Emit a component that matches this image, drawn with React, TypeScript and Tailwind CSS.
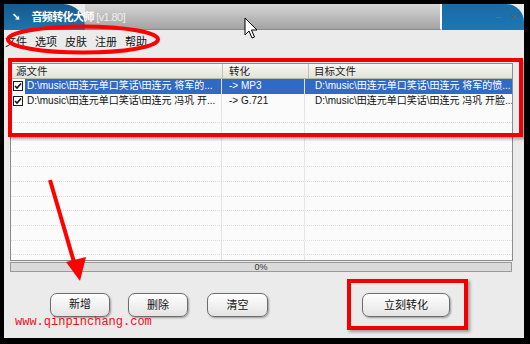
import React from "react";

const font = { fontFamily: '"Liberation Sans", "Noto Sans CJK SC", sans-serif' };

const rows = [
  {
    src: "D:\\music\\田连元单口笑话\\田连元 将军的...",
    conv: "-> MP3",
    dst: "D:\\music\\田连元单口笑话\\田连元 将军的愤...",
    selected: true,
  },
  {
    src: "D:\\music\\田连元单口笑话\\田连元 冯巩 开...",
    conv: "-> G.721",
    dst: "D:\\music\\田连元单口笑话\\田连元 冯巩 开脸...",
    selected: false,
  },
];

function CheckBox() {
  return (
    <span className="w-[10px] h-[10px] border border-[#1c1c1c] bg-white flex items-center justify-center shrink-0">
      <svg width="8" height="8" viewBox="0 0 8 8">
        <path d="M1 4 L3 6 L7 1.5" fill="none" stroke="#111" strokeWidth="1.6" />
      </svg>
    </span>
  );
}

function Button({ label, w }: { label: string; w: string }) {
  return (
    <button
      className={`${w} h-[24px] rounded-[7px] border border-[#6d6d6d] bg-gradient-to-b from-white to-[#e4e4e4] text-[11px] text-[#111] shadow-[1px_1px_2px_rgba(0,0,0,0.35)]`}
    >
      {label}
    </button>
  );
}

export default function App() {
  const empty = Array.from({ length: 11 });
  return (
    <div className="relative w-[530px] h-[344px] bg-black overflow-hidden pl-[4px] pt-[4px] pr-[6px] pb-[6px]" style={font}>
      <div className="relative w-full h-full bg-[#ebebeb] flex flex-col">
        {/* title bar */}
        <div className="relative h-[26px] flex shrink-0">
          <div className="w-[81px] bg-gradient-to-b from-[#155a8c] to-[#1f74ad] rounded-tr-[22px]" />
          <div className="flex-1 bg-gradient-to-b from-[#d6d6d6] to-[#a3a3a3] border-r-2 border-white border-b border-b-[#8a8a8a]" />
          <div className="w-[82px] bg-gradient-to-b from-[#1b6aa3] to-[#1a78b6] rounded-tr-[18px] flex items-center justify-end gap-[10px] pr-[8px]">
            <span className="text-[9px] text-[#8a6a55] leading-none">–</span>
            <span className="text-[9px] text-[#7a5a4a] leading-none">×</span>
          </div>
          <div className="absolute left-[8px] top-[5px] flex items-center gap-[12px] text-white font-bold text-[11px] tracking-[-0.6px]">
            <span className="text-[10px] leading-none">➘</span>
            <span>
              音频转化大师 <span className="text-[#eeeeee] font-normal">[v1.80]</span>
            </span>
          </div>
        </div>

        {/* menu */}
        <div className="h-[24px] flex items-center gap-[8px] pl-[1px] text-[11px] text-[#111] shrink-0">
          <span>文件</span>
          <span>选项</span>
          <span>皮肤</span>
          <span>注册</span>
          <span>帮助</span>
        </div>

        {/* list */}
        <div className="ml-[6px] mt-[9px] w-[503px] h-[198px] border border-[#8c8c8c] bg-[#fbfbfb] flex flex-col overflow-hidden text-[10px] leading-none">
          <div className="h-[15px] flex bg-gradient-to-b from-[#f7f7f4] to-[#e3e2da] border-b border-[#b8b7ae] text-[#222] text-[10.5px] shrink-0">
            <div className="w-[212px] border-r border-[#c2c1b8] pl-[5px] flex items-center">源文件</div>
            <div className="w-[86px] border-r border-[#c2c1b8] pl-[6px] flex items-center">转化</div>
            <div className="flex-1 pl-[5px] flex items-center">目标文件</div>
          </div>
          {rows.map((r, i) => (
            <div key={i} className="h-[14.7px] flex shrink-0 whitespace-nowrap">
              <div className="w-[210px] flex items-center pl-[2px] gap-[2px] overflow-hidden">
                <CheckBox />
                <span className={`flex-1 h-full flex items-center pl-[2px] ${r.selected ? "bg-[#316ac5] text-white" : "text-[#111]"}`}>{r.src}</span>
              </div>
              <div className={`w-[83px] flex items-center pl-[7px] border-l border-[#e2e2e2] overflow-hidden ${r.selected ? "bg-[#316ac5] text-white" : "text-[#111]"}`}>{r.conv}</div>
              <div className={`flex-1 flex items-center pl-[10px] border-l border-[#e2e2e2] overflow-hidden ${r.selected ? "bg-[#316ac5] text-white" : "text-[#111]"}`}>{r.dst}</div>
            </div>
          ))}
          {empty.map((_, i) => (
            <div key={i} className="h-[14.7px] flex shrink-0 border-b border-dotted border-[#dcdcdc]">
              <div className="w-[210px]" />
              <div className="w-[83px] border-l border-[#e4e4e4]" />
              <div className="flex-1 border-l border-[#e4e4e4]" />
            </div>
          ))}
        </div>

        {/* progress */}
        <div className="ml-[6px] mt-[1px] w-[502px] h-[10px] border border-[#9a9a9a] bg-[#dadada] flex items-center justify-center text-[9px] text-[#333] leading-none">
          0%
        </div>

        {/* buttons */}
        <div className="mt-[20px] flex items-center pl-[46px]">
          <Button label="新增" w="w-[60px]" />
          <div className="ml-[18px]">
            <Button label="删除" w="w-[60px]" />
          </div>
          <div className="ml-[19px]">
            <Button label="清空" w="w-[61px]" />
          </div>
          <div className="ml-[94px]">
            <Button label="立刻转化" w="w-[88px]" />
          </div>
        </div>

        {/* watermark */}
        <div className="absolute left-[11px] top-[312px] text-[12px] text-[#e8141a] leading-none" style={{ fontFamily: '"Liberation Mono", monospace' }}>
          www.qinpinchang.com
        </div>
      </div>

      {/* annotations */}
      <div className="absolute left-[8px] top-[58px] w-[515px] h-[79px] border-[4px] border-[#f20000] shadow-[2px_2px_3px_rgba(0,0,0,0.35)]" />
      <div className="absolute left-[347px] top-[279px] w-[121px] h-[51px] border-[4px] border-[#f20000] shadow-[2px_2px_3px_rgba(0,0,0,0.35)]" />
      <svg className="absolute left-0 top-0" width="530" height="344" viewBox="0 0 530 344">
        <ellipse cx="83" cy="39.5" rx="75" ry="13" fill="none" stroke="#f00" strokeWidth="4" />
        <line x1="50" y1="180" x2="74" y2="262" stroke="#f00" strokeWidth="4" />
        <polygon points="66,262 86,257 80,281" fill="#f00" />
        <path
          d="M245 18 L245 35 L249 31 L252 38 L254.5 37 L251.5 30 L257 30 Z"
          fill="#fff"
          stroke="#000"
          strokeWidth="1"
        />
      </svg>
    </div>
  );
}
